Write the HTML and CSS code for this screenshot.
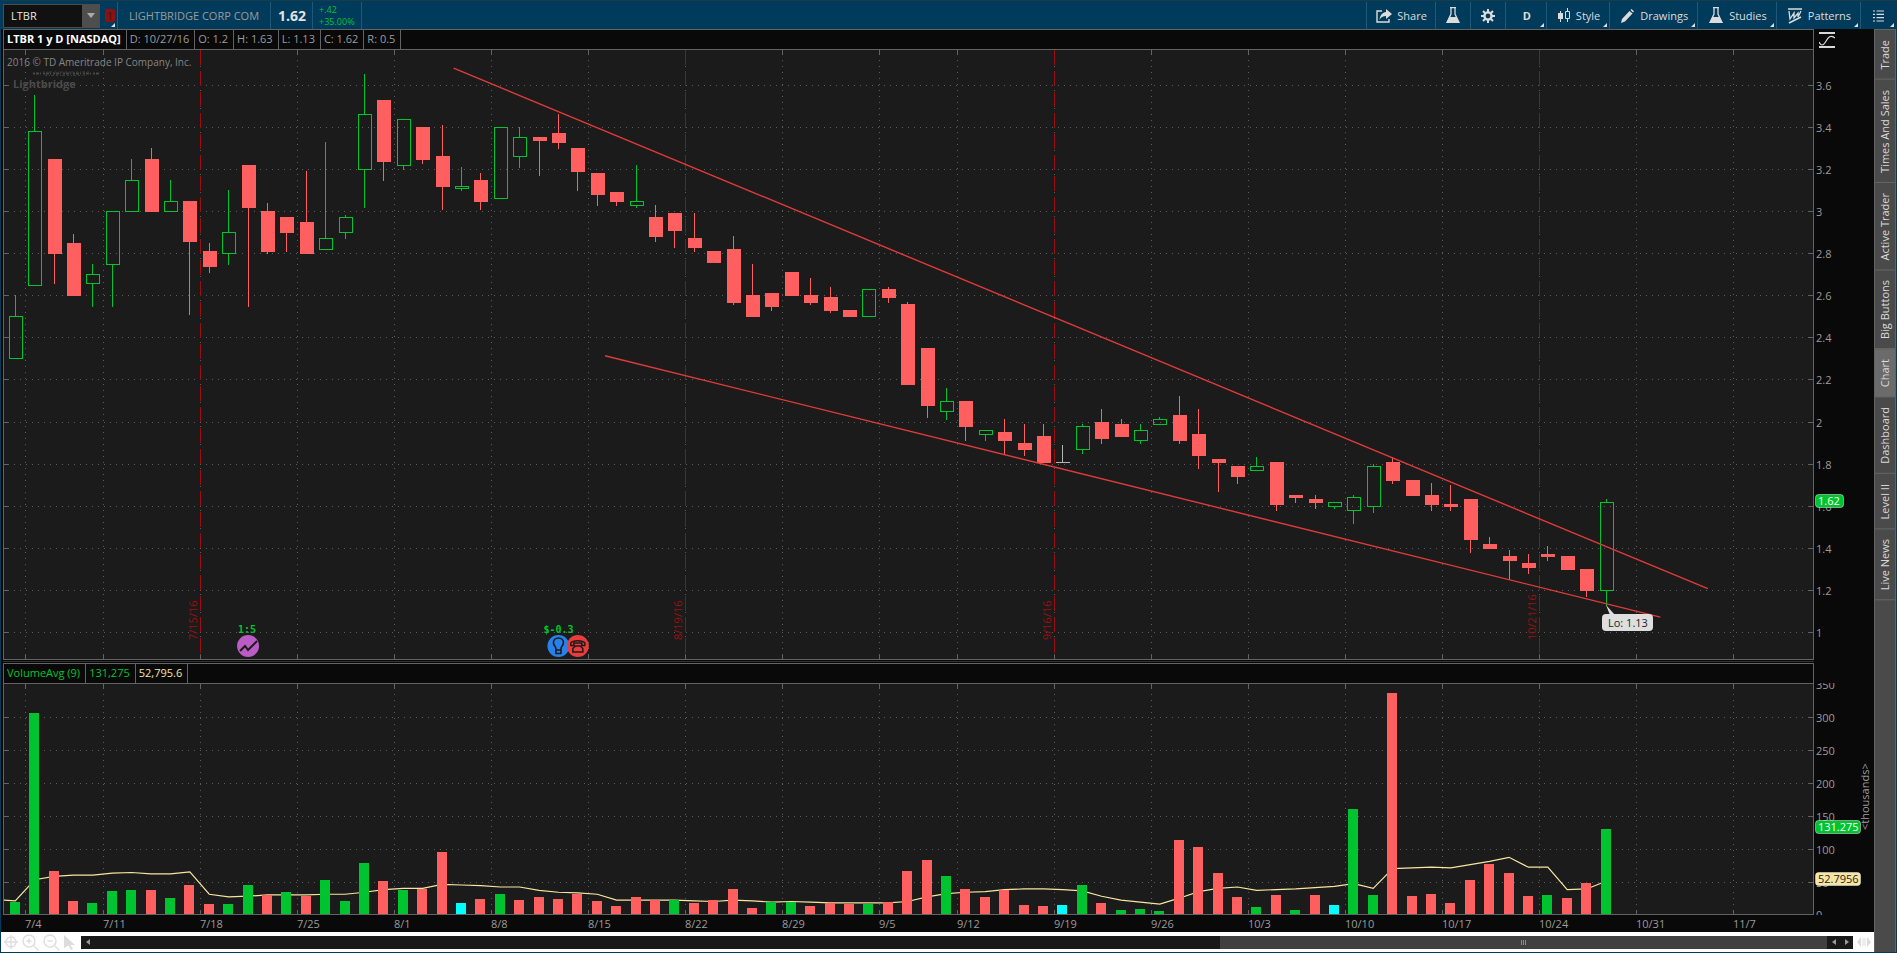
FILE: index.html
```html
<!DOCTYPE html>
<html lang="en">
<head>
    <meta charset="UTF-8">
    <meta name="viewport" content="width=device-width, initial-scale=1.0">
    <title>LTBR Chart</title>
    <link rel="stylesheet" href="styles.css">
</head>
<body>
    <header class="toolbar">
        <div class="symbol-cell">
            <div class="symbol-box">
                <input type="text" id="symbol" value="LTBR" aria-label="Symbol">
                <button class="drop-btn" aria-label="Symbol list"><svg width="8" height="5" viewBox="0 0 8 5"><path d="M0 0h8L4 5z" fill="#ababab"/></svg></button>
            </div>
            <button class="link-btn corner" aria-label="Link group"><span>1</span></button>
        </div>
        <div class="company">LIGHTBRIDGE CORP COM</div>
        <div class="last-price">1.62</div>
        <div class="change"><span>+.42</span><span>+35.00%</span></div>
        <div class="tools">
            <button class="tool share">
                <svg width="16" height="14" viewBox="0 0 16 14"><path d="M6 2H1v11h12v-3" fill="none" stroke="#dcdcdc" stroke-width="1.4"/><path d="M10 0l6 5-6 5V7C7 7 5 8 3.500 11 4 6 6.500 3.500 10 3z" fill="#dcdcdc"/></svg>
                Share
            </button>
            <button class="tool narrow" aria-label="Lab">
                <svg width="14" height="17" viewBox="0 0 14 17"><path d="M4 .7h6M5 1v6L1 15.300h12L9 7V1" fill="none" stroke="#dcdcdc" stroke-width="1.300"/><path d="M3.500 10h7L13.500 16H.5z" fill="#dcdcdc"/></svg>
            </button>
            <button class="tool narrow" aria-label="Settings">
                <svg width="14" height="14" viewBox="0 0 14 14"><circle cx="7" cy="7" r="3.600" fill="none" stroke="#dcdcdc" stroke-width="2.400"/><path d="M7 0v3M7 11v3M0 7h3M11 7h3M2 2l2 2M10 10l2 2M2 12l2-2M10 4l2-2" stroke="#dcdcdc" stroke-width="2"/></svg>
            </button>
            <button class="tool period corner">D</button>
            <button class="tool corner">
                <svg width="12" height="15" viewBox="0 0 12 15"><path d="M2.500 3v11M9.500 0v3M9.500 11v3" stroke="#dcdcdc"/><path d="M0 5h5v6H0z" fill="#dcdcdc"/><path d="M7.500 3.500h4v7h-4z" fill="none" stroke="#dcdcdc"/></svg>
                Style
            </button>
            <button class="tool corner">
                <svg width="13" height="14" viewBox="0 0 13 14"><path d="M0 14l1-4L8.500 2 11.500 4.500 4 12.500zM9.500 1L10.500 0 13 2.300 12 3.600z" fill="#dcdcdc"/></svg>
                Drawings
            </button>
            <button class="tool corner">
                <svg width="14" height="17" viewBox="0 0 14 17"><path d="M4 .7h6M5 1v6L1 15.300h12L9 7V1" fill="none" stroke="#dcdcdc" stroke-width="1.300"/><path d="M3.500 10h7L13.500 16H.5z" fill="#dcdcdc"/></svg>
                Studies
            </button>
            <button class="tool corner">
                <svg width="14" height="16" viewBox="0 0 14 16"><path d="M0 1h14M1 15L13 9" stroke="#dcdcdc" stroke-width="1.600"/><path d="M1 3l1 8 4-6v5l4-5v4l3-6" fill="none" stroke="#dcdcdc" stroke-width="1.300"/></svg>
                Patterns
            </button>
            <button class="tool narrow corner" aria-label="Menu">
                <svg width="11" height="12" viewBox="0 0 11 12"><path d="M0 1h2M0 4.300h2M0 7.600h2M0 11h2M3.500 1H11M3.500 4.300H11M3.500 7.600H11M3.500 11H11" stroke="#dcdcdc" stroke-width="1.200"/></svg>
            </button>
        </div>
    </header>

    <main class="workspace">
        <div class="charts">
            <section class="panel">
                <div class="study-bar">
                    <strong>LTBR 1 y D [NASDAQ]</strong>
                    <span>D: 10/27/16</span>
                    <span>O: 1.2</span>
                    <span>H: 1.63</span>
                    <span>L: 1.13</span>
                    <span>C: 1.62</span>
                    <span>R: 0.5</span>
                </div>
                <button class="fit-btn" aria-label="Fit price scale">
                    <svg width="16" height="16" viewBox="0 0 16 16"><path d="M0 1h16M0 15h16" stroke="#d8d8d8" stroke-width="2"/><path d="M0 10c2 4 4 4 6.500 0S11 2 16 6" fill="none" stroke="#d8d8d8" stroke-width="1.200"/></svg>
                </button>
                <div class="plot">
                    <svg id="price-plot"></svg>
                    <div class="watermark">
                        <p>2016 © TD Ameritrade IP Company, Inc.</p>
                        <svg width="66" height="5" viewBox="0 0 66 5"><path d="M0 2.500h66" stroke="#484848" stroke-width="2" stroke-dasharray="2 1 3 1 1 2"/><path d="M10 1h46M12 4.500h40" stroke="#3c3c3c" stroke-dasharray="2 2 1 1 3 2"/></svg>
                        <strong>Lightbridge</strong>
                    </div>
                </div>
                <svg class="axis" id="price-axis"></svg>
            </section>
            <div class="splitter"></div>
            <section class="panel">
                <div class="study-bar">
                    <span class="vol">VolumeAvg (9)</span>
                    <span class="vol">131,275</span>
                    <span class="avg">52,795.6</span>
                </div>
                <div></div>
                <div class="plot"><svg id="volume-plot"></svg></div>
                <svg class="axis" id="volume-axis"></svg>
            </section>
            <svg class="dates" id="dates"></svg>
            <footer class="scroll-row">
                <button aria-label="Crosshair"><svg width="14" height="14" viewBox="0 0 14 14"><circle cx="7" cy="7" r="5"/><path d="M7 0v14M0 7h14"/></svg></button>
                <button aria-label="Zoom in"><svg width="17" height="17" viewBox="0 0 17 17"><circle cx="7" cy="7" r="6"/><path d="M11.500 11.500l5 5M4.500 7h5M7 4.500v5"/></svg></button>
                <button aria-label="Zoom out"><svg width="17" height="17" viewBox="0 0 17 17"><circle cx="7" cy="7" r="6"/><path d="M11.500 11.500l5 5M4.500 7h5"/></svg></button>
                <button aria-label="Pointer"><svg class="solid" width="11" height="15" viewBox="0 0 11 15"><path d="M0 0l11 10H6.500l2.500 4-2 1-2.500-4.500L0 13z"/></svg></button>
                <div class="scrollbar">
                    <button aria-label="Scroll to start"><svg class="arrow" width="4" height="6" viewBox="0 0 4 6"><path d="M4 0v6L0 3z"/></svg></button>
                    <div class="track"><div class="thumb"><i></i><i></i><i></i></div></div>
                    <button aria-label="Scroll left"><svg class="arrow" width="4" height="6" viewBox="0 0 4 6"><path d="M4 0v6L0 3z"/></svg></button>
                    <button aria-label="Scroll right"><svg class="arrow" width="4" height="6" viewBox="0 0 4 6"><path d="M0 0v6L4 3z"/></svg></button>
                </div>
                <button class="expand" aria-label="Expand"><svg class="solid" width="14" height="10" viewBox="0 0 14 10"><path d="M4 0v10L0 5zM10 0v10l4-5zM5.500 1h1v8h-1zM7.500 1h1v8h-1z"/></svg></button>
            </footer>
        </div>
        <nav class="side-tabs">
            <a href="#trade">Trade</a>
            <a href="#times">Times And Sales</a>
            <a href="#active">Active Trader</a>
            <a href="#buttons">Big Buttons</a>
            <a href="#chart" class="active">Chart</a>
            <a href="#dashboard">Dashboard</a>
            <a href="#level2">Level II</a>
            <a href="#news">Live News</a>
        </nav>
    </main>
    <script src="chart.js"></script>
</body>
</html>
```

FILE: styles.css
```css
:root {
    --blue: #003b5b;
    --black: #090909;
    --plot: #1b1b1b;
    --line: #636363;
    --grid: #5c5c5c;
    --green: #00c42f;
    --red: #ff5f5f;
    --cream: #f7e6a1;
    --text: #9b9b9b;
}
* { box-sizing: border-box; }
body { margin: 0; height: 100vh; display: flex; flex-direction: column; padding: 0 1px 1px; background: var(--blue); font-family: "Open Sans", "Noto Sans", sans-serif; font-size: 11px; color: var(--text); overflow: hidden; }
button { margin: 0; padding: 0; border: 0; background: none; color: inherit; font: inherit; cursor: pointer; }
svg { display: block; }

/* toolbar */
.toolbar { flex: none; height: 29px; padding-top: 1px; display: flex; border-top: 1px solid #1b3a4a; }
.toolbar > div { border-right: 1px solid #1f5878; display: flex; align-items: center; }
.symbol-cell { width: 117px; padding-left: 2px; gap: 3px; }
.symbol-box { width: 97px; height: 24px; display: flex; background: #111; border: 1px solid #4c4c4c; }
.symbol-box input { flex: 1; min-width: 0; padding: 0 0 0 7px; border: 0; outline: 0; background: none; color: #e6e6e6; font: inherit; }
.drop-btn { width: 17px; background: #4e4e4e; display: flex; align-items: center; justify-content: center; }
.link-btn { position: relative; width: 14px; align-self: stretch; }
.link-btn span { display: block; width: 10px; margin: 0 auto; line-height: 13px; border-radius: 2px; background: #8e1010; color: #3a1a20; }
.corner { position: relative; }
.corner::after { content: ""; position: absolute; right: 2px; bottom: 2px; border: 2px solid; border-color: transparent #e0e0e0 #e0e0e0 transparent; }
.company { padding: 0 11px; }
.last-price { padding: 0 6px 0 7px; color: #e2e2e2; font-size: 14px; font-weight: bold; }
.toolbar .change { padding: 0 6px; flex-direction: column; align-items: flex-start; justify-content: center; font-size: 9px; line-height: 12px; color: var(--green); }
.toolbar .tools { margin-left: auto; border-right: 0; align-items: stretch; border-left: 1px solid #1f5878; }
.tool { display: flex; align-items: center; justify-content: center; gap: 6px; padding: 0 9px 0 11px; border-right: 1px solid #1f5878; color: #dcdcdc; }
.tool:last-child { border-right: 0; }
.tool.share { padding: 0 8px 0 9px; gap: 5px; }
.tool.narrow { width: 35px; padding: 0; }
.tool.period { width: 41px; font-weight: bold; }

/* chart area */
.workspace { flex: 1; min-height: 0; display: flex; }
.charts { flex: 1; min-width: 0; display: grid; grid-template-rows: 631fr 3px 252fr 17px 20px; background: var(--black); }
.panel { display: grid; grid-template-columns: 1fr 60px; grid-template-rows: 20px 1fr; margin-left: 2px; min-height: 0; }
.study-bar { display: flex; border: 1px solid var(--line); border-bottom: 0; line-height: 18px; }
.study-bar > * { padding: 0 5px 0 3px; border-right: 1px solid var(--line); }
.study-bar strong { color: #fff; }
.study-bar .vol { color: var(--green); }
.study-bar .avg { color: var(--cream); }
.fit-btn { padding: 2px 0 0 5px; }
.plot { position: relative; min-height: 0; min-width: 0; border: 1px solid var(--line); background: var(--plot); overflow: hidden; }
.plot > svg, .axis { width: 100%; height: 100%; }
.axis { min-height: 0; overflow: hidden; }
.watermark { position: absolute; left: 3px; top: 5px; color: #858585; }
.watermark p { margin: 0; font-size: 10px; line-height: 14px; }
.watermark svg { margin: 2px 0 1px 26px; }
.watermark strong { display: block; margin-left: 6px; line-height: 14px; color: #4a4a4a; }
.splitter { margin: 1px 60px 1px 2px; background: #303030; }
.dates { width: 100%; height: 17px; }

/* bottom row */
.scroll-row { display: flex; align-items: center; padding-left: 3px; gap: 4px; background: #fff; }
.scroll-row svg { fill: none; stroke: #dedede; stroke-width: 1.4; }
.scroll-row svg.solid { fill: #dcdcdc; stroke: none; }
.scroll-row svg.arrow { fill: #9a9a9a; stroke: none; }
.scrollbar { flex: 1; height: 13px; margin-left: 2px; display: flex; background: #191919; }
.scrollbar button { width: 13px; display: flex; align-items: center; justify-content: center; }
.track { flex: 1; display: flex; justify-content: flex-end; }
.thumb { width: 35%; background: #404040; display: flex; align-items: center; justify-content: center; gap: 1px; }
.thumb i { width: 1px; height: 5px; background: #8c8c8c; }
.expand { padding-right: 3px; }

.side-tabs { width: 22px; display: flex; flex-direction: column; background: #4a4a4a; border: 1px solid #636363; border-bottom: 0; }
.side-tabs a { padding: 9px 0 10px; writing-mode: vertical-rl; transform: rotate(180deg); line-height: 20px; border-top: 1px solid #676767; color: #d9d9d9; text-decoration: none; }
.side-tabs a.active { background: #6b6b6b; }

/* drawn content */
.grid { stroke: var(--grid); stroke-dasharray: 1 5; }
.tick { stroke: var(--line); }
.expiry { stroke: #9c0d12; stroke-dasharray: 15 6; }
.expiry-label { fill: #981212; }
.trend { stroke: #e03a3a; stroke-width: 1.4; }
.up { stroke: var(--green); fill: none; }
.down { stroke: var(--red); fill: var(--red); }
.flat { stroke: #b4b4b4; fill: none; }
.bar-g { fill: var(--green); }
.bar-r { fill: var(--red); }
.bar-c { fill: #00ffff; }
.avg-line { fill: none; stroke: var(--cream); stroke-width: 1.2; }
.label { fill: var(--text); }
.event-label { fill: var(--green); font: bold 10px "DejaVu Sans Mono", monospace; text-anchor: middle; }
```

FILE: chart.js
```js
// open, high, low, close, volume (thousands), bar colour, 9 day average
const DATA = [
    [2.30, 2.60, 2.30, 2.50, 21, 'g', 23], [2.65, 3.55, 2.65, 3.38, 307, 'g', 55], [3.25, 3.25, 2.66, 2.80, 67, 'r', 60],
    [2.85, 2.89, 2.60, 2.60, 22, 'r', 62], [2.66, 2.75, 2.55, 2.70, 19, 'g', 62], [2.75, 3.00, 2.55, 3.00, 37, 'g', 65],
    [3.00, 3.25, 3.00, 3.15, 38, 'g', 66], [3.25, 3.30, 3.00, 3.00, 38, 'r', 64], [3.00, 3.15, 3.00, 3.05, 26, 'g', 64],
    [3.05, 3.05, 2.51, 2.86, 46, 'r', 67], [2.81, 2.85, 2.71, 2.74, 17, 'r', 33], [2.80, 3.10, 2.75, 2.90, 17, 'g', 29],
    [3.22, 3.22, 2.55, 3.02, 46, 'g', 30], [3.00, 3.04, 2.80, 2.81, 31, 'r', 32], [2.97, 2.97, 2.81, 2.90, 35, 'g', 32],
    [2.95, 3.19, 2.80, 2.80, 29, 'r', 32], [2.82, 3.33, 2.82, 2.87, 54, 'g', 33], [2.90, 2.98, 2.87, 2.97, 22, 'g', 33],
    [3.20, 3.65, 3.02, 3.46, 79, 'g', 36], [3.53, 3.53, 3.15, 3.24, 52, 'r', 40], [3.22, 3.44, 3.20, 3.44, 38, 'g', 42],
    [3.40, 3.40, 3.23, 3.25, 40, 'r', 42], [3.26, 3.41, 3.01, 3.12, 97, 'r', 48], [3.11, 3.21, 3.10, 3.12, 19, 'c', 47],
    [3.15, 3.18, 3.01, 3.05, 25, 'r', 46], [3.06, 3.40, 3.06, 3.40, 32, 'g', 44], [3.26, 3.40, 3.21, 3.35, 23, 'r', 44],
    [3.35, 3.35, 3.17, 3.34, 28, 'r', 39], [3.37, 3.46, 3.30, 3.33, 25, 'r', 36], [3.30, 3.30, 3.10, 3.19, 32, 'r', 35],
    [3.18, 3.18, 3.03, 3.08, 22, 'r', 33], [3.09, 3.09, 3.03, 3.05, 14, 'r', 24], [3.03, 3.22, 3.02, 3.05, 28, 'r', 24],
    [2.97, 3.03, 2.86, 2.88, 24, 'r', 24], [2.99, 2.99, 2.83, 2.91, 23, 'g', 24], [2.87, 2.99, 2.81, 2.83, 19, 'r', 23],
    [2.81, 2.81, 2.76, 2.76, 23, 'r', 22], [2.82, 2.88, 2.56, 2.57, 40, 'r', 24], [2.60, 2.75, 2.50, 2.50, 11, 'r', 23],
    [2.61, 2.61, 2.53, 2.55, 20, 'g', 21], [2.71, 2.71, 2.60, 2.60, 20, 'g', 22], [2.60, 2.68, 2.56, 2.57, 14, 'r', 21],
    [2.59, 2.64, 2.52, 2.53, 19, 'r', 20], [2.53, 2.53, 2.50, 2.50, 17, 'r', 20], [2.50, 2.63, 2.50, 2.63, 17, 'g', 20],
    [2.63, 2.64, 2.57, 2.59, 20, 'r', 20], [2.56, 2.57, 2.18, 2.18, 67, 'r', 22], [2.35, 2.35, 2.02, 2.08, 84, 'r', 29],
    [2.05, 2.16, 2.01, 2.10, 60, 'g', 34], [2.10, 2.10, 1.91, 1.98, 40, 'r', 36], [1.94, 1.96, 1.91, 1.96, 28, 'r', 37],
    [1.95, 2.01, 1.85, 1.91, 38, 'r', 40], [1.90, 1.99, 1.84, 1.87, 16, 'r', 41], [1.93, 1.99, 1.81, 1.81, 14, 'r', 41],
    [1.81, 1.89, 1.81, 1.81, 16, 'c', 40], [1.87, 1.99, 1.85, 1.98, 47, 'g', 38], [2.00, 2.06, 1.90, 1.92, 19, 'r', 30],
    [1.99, 2.01, 1.93, 1.93, 8, 'g', 24], [1.91, 1.99, 1.90, 1.96, 10, 'g', 21], [1.99, 2.02, 1.99, 2.01, 7, 'g', 18],
    [2.03, 2.12, 1.90, 1.91, 114, 'r', 27], [1.94, 2.06, 1.78, 1.84, 104, 'r', 37], [1.82, 1.82, 1.67, 1.81, 64, 'r', 42],
    [1.79, 1.79, 1.71, 1.74, 28, 'r', 44], [1.77, 1.83, 1.77, 1.79, 13, 'g', 39], [1.81, 1.81, 1.58, 1.61, 31, 'r', 40],
    [1.65, 1.65, 1.62, 1.64, 8, 'g', 41], [1.63, 1.65, 1.59, 1.62, 31, 'r', 43], [1.60, 1.62, 1.59, 1.62, 16, 'c', 45],
    [1.58, 1.65, 1.52, 1.64, 161, 'g', 49], [1.60, 1.80, 1.57, 1.79, 31, 'g', 42], [1.81, 1.83, 1.71, 1.72, 338, 'r', 72],
    [1.72, 1.72, 1.65, 1.65, 29, 'r', 73], [1.65, 1.71, 1.58, 1.61, 32, 'r', 74], [1.61, 1.70, 1.58, 1.60, 19, 'r', 73],
    [1.63, 1.63, 1.38, 1.44, 54, 'r', 78], [1.42, 1.45, 1.40, 1.40, 78, 'r', 83], [1.36, 1.39, 1.25, 1.34, 64, 'r', 89],
    [1.33, 1.37, 1.28, 1.31, 29, 'r', 74], [1.37, 1.41, 1.34, 1.36, 31, 'g', 74], [1.36, 1.36, 1.30, 1.30, 26, 'r', 40],
    [1.30, 1.30, 1.17, 1.20, 49, 'r', 41], [1.20, 1.63, 1.13, 1.62, 131.275, 'g', 52.8]
];

// week boundaries, in bars from the left
const WEEKS = [
    [0.5, '7/4'], [4.5, '7/11'], [9.5, '7/18'], [14.5, '7/25'], [19.5, '8/1'], [24.5, '8/8'], [29.5, '8/15'],
    [34.5, '8/22'], [39.5, '8/29'], [44.5, '9/5'], [48.5, '9/12'], [53.5, '9/19'], [58.5, '9/26'], [63.5, '10/3'],
    [68.5, '10/10'], [73.5, '10/17'], [78.5, '10/24'], [83.5, '10/31'], [88.5, '11/7']
];
const EXPIRIES = [[9.5, '7/15/16'], [34.5, '8/19/16'], [53.5, '9/16/16'], [78.5, '10/21/16']];
// bar index and price at each end
const TRENDS = [[22.6, 3.682, 87.25, 1.208], [30.4, 2.315, 84.8, 1.073]];

const BARS_ACROSS = 93.25;
const FIRST_BAR = 0.58;
const PRICE = { max: 3.768, min: 0.874 };
const VOLUME = { max: 350.5, min: 1.5 };

const get = (id) => document.getElementById(id);
const line = (cls, x1, y1, x2, y2) => `<line class="${cls}" x1="${x1}" y1="${y1}" x2="${x2}" y2="${y2}"/>`;

function drawGrid(w, h, rows, xOf, yOf) {
    let out = '';
    WEEKS.forEach(([i]) => {
        const x = Math.ceil(xOf(i)) + 0.5;
        out += line('grid', x, 4, x, h) + line('tick', x, 0, x, 5) + line('tick', x, h - 4, x, h);
    });
    rows.forEach((v) => {
        const y = Math.floor(yOf(v)) + 0.5;
        out += line('grid', 4, y, w, y) + line('tick', 0, y, 4, y) + line('tick', w - 4, y, w, y);
    });
    return out;
}

function drawTag(y, text, width, fill, color) {
    return `<rect x="1.5" y="${y - 6.5}" width="${width}" height="13" rx="3" fill="${fill}" stroke="#ffffff" stroke-opacity=".45"/>
        <text x="4" y="${y + 4}" fill="${color}">${text}</text>`;
}

function drawPrice(w, h, xOf) {
    const yOf = (p) => (PRICE.max - p) / (PRICE.max - PRICE.min) * h;
    const rows = [];
    for (let n = 18; n >= 5; n--) rows.push(n / 5);
    let out = drawGrid(w, h, rows, xOf, yOf);

    EXPIRIES.forEach(([i, text]) => {
        const x = Math.ceil(xOf(i)) + 0.5;
        out += line('expiry', x, 0, x, h);
        out += `<text class="expiry-label" transform="translate(${x - 4} ${h - 19}) rotate(-90)">${text}</text>`;
    });

    DATA.forEach(([o, hi, lo, c], i) => {
        const x = Math.floor(xOf(i));
        const top = Math.floor(yOf(Math.max(o, c)));
        const bottom = Math.floor(yOf(Math.min(o, c)));
        const cls = c > o ? 'up' : c < o ? 'down' : 'flat';
        const high = Math.floor(yOf(hi));
        const low = Math.floor(yOf(lo)) + 1;
        if (high < top) out += line(cls, x + 0.5, high, x + 0.5, top);
        if (low > bottom + 1) out += line(cls, x + 0.5, bottom + 1, x + 0.5, low);
        out += `<rect class="${cls}" x="${x - 5.5}" y="${top + 0.5}" width="13" height="${bottom - top}"/>`;
        if (cls === 'flat') out += line(cls, x - 6, top + 0.5, x + 8, top + 0.5);
    });

    TRENDS.forEach(([i1, p1, i2, p2]) => { out += line('trend', xOf(i1), yOf(p1), xOf(i2), yOf(p2)); });

    // corporate events
    const ey = h - 13;
    const split = xOf(12), earn = xOf(28), call = xOf(29);
    out += `<text class="event-label" x="${split - 1}" y="${h - 26}">1:5</text>
        <circle cx="${split}" cy="${ey}" r="11" fill="#bb5cc4"/>
        <path d="M${split - 8} ${ey + 5}l5-5 3 4 9-9" fill="none" stroke="#1b1b1b" stroke-width="2"/>
        <text class="event-label" x="${earn}" y="${h - 26}">$-0.3</text>
        <circle cx="${earn}" cy="${ey}" r="11" fill="#2682ea"/>
        <path transform="translate(${earn} ${ey})" d="M-2.500 3C-2.500 0-5 0-5-3.500a5 4.500 0 0 1 10 0C5 0 2.500 0 2.500 3v4.500h-5zM-2.500 4h5" fill="none" stroke="#1b1b1b" stroke-width="1.600"/>
        <circle cx="${call}" cy="${ey}" r="11" fill="#ea3c3c"/>
        <path transform="translate(${call} ${ey})" d="M-7-.5V-3c2-3 12-3 14 0v2.500H4V-3h-8v2.500zM-5 6V2.500L-2.500 0h5L5 2.500V6z" fill="none" stroke="#1b1b1b" stroke-width="1.500"/>`;

    // low bubble
    const bx = Math.floor(xOf(82)), by = Math.floor(yOf(1.13));
    out += `<path d="M${bx} ${by}l4 10h5z" fill="#dcdcdc"/>
        <rect x="${bx - 4}" y="${by + 9}" width="51" height="17" rx="4" fill="#dedede"/>
        <text x="${bx + 2}" y="${by + 22}" fill="#222">Lo: 1.13</text>`;
    get('price-plot').innerHTML = out;

    let axis = '';
    rows.forEach((v) => { axis += `<text class="label" x="2" y="${Math.floor(yOf(v)) + 6}">${v}</text>`; });
    get('price-axis').innerHTML = axis + drawTag(Math.floor(yOf(1.62)), '1.62', 28, '#00c42f', '#fff');
}

function drawVolume(w, h, xOf) {
    const yOf = (v) => (VOLUME.max - v) / (VOLUME.max - VOLUME.min) * h;
    let out = drawGrid(w, h, [300, 250, 200, 150, 100, 50], xOf, yOf);
    let points = `0,${yOf(24) + 1}`;
    let bars = '';
    DATA.forEach((row, i) => {
        const x = Math.floor(xOf(i));
        const y = Math.floor(yOf(row[4])) + 1;
        bars += `<rect class="bar-${row[5]}" x="${x - 5}" y="${y}" width="10" height="${Math.max(h - y, 0)}"/>`;
        points += ` ${xOf(i)},${yOf(row[6]) + 1}`;
    });
    get('volume-plot').innerHTML = out + `<polyline class="avg-line" points="${points}"/>` + bars;

    let axis = '';
    [350, 300, 250, 200, 150, 100, 50, 0].forEach((v) => {
        axis += `<text class="label" x="2" y="${Math.floor(yOf(v)) + 6}">${v}</text>`;
    });
    axis += `<text class="label" transform="translate(55 ${Math.floor(yOf(126))}) rotate(-90)">&lt;thousands&gt;</text>`;
    axis += drawTag(Math.floor(yOf(131.275)), '131.275', 45, '#00c42f', '#fff');
    axis += drawTag(Math.floor(yOf(52.8)), '52.7956', 45, '#f7e6a1', '#222');
    get('volume-axis').innerHTML = axis;
}

function draw() {
    const price = get('price-plot').getBoundingClientRect();
    const volume = get('volume-plot').getBoundingClientRect();
    const step = price.width / BARS_ACROSS;
    const xOf = (i) => (i + FIRST_BAR) * step;
    drawPrice(price.width, price.height, xOf);
    drawVolume(volume.width, volume.height, xOf);
    get('dates').innerHTML = WEEKS.map(([i, text]) => `<text class="label" x="${Math.ceil(xOf(i)) + 3}" y="13">${text}</text>`).join('');
}

window.addEventListener('resize', draw);
draw();
```
